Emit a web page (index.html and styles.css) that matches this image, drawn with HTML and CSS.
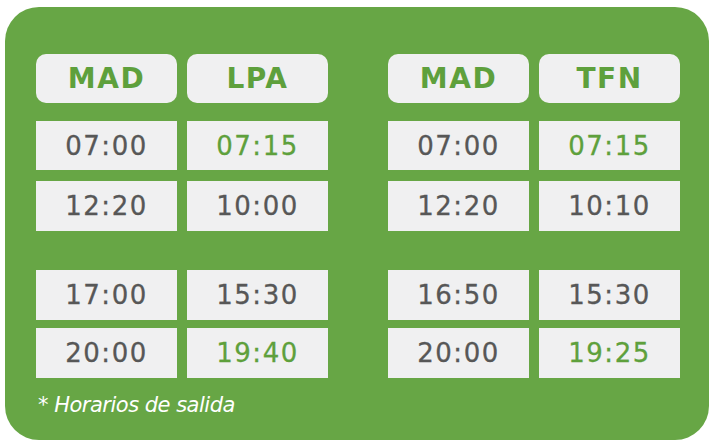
FILE: index.html
```html
<!DOCTYPE html>
<html>
<head>
<meta charset="utf-8">
<link rel="stylesheet" href="styles.css">
</head>
<body>
<div class="card">
  <div class="groups">
    <div class="group">
      <div class="row heads">
        <div class="head">MAD</div>
        <div class="head">LPA</div>
      </div>
      <div class="row r1">
        <div class="cell">07:00</div>
        <div class="cell green">07:15</div>
      </div>
      <div class="row r2">
        <div class="cell">12:20</div>
        <div class="cell">10:00</div>
      </div>
      <div class="row r3">
        <div class="cell">17:00</div>
        <div class="cell">15:30</div>
      </div>
      <div class="row r4">
        <div class="cell">20:00</div>
        <div class="cell green">19:40</div>
      </div>
    </div>
    <div class="group">
      <div class="row heads">
        <div class="head">MAD</div>
        <div class="head">TFN</div>
      </div>
      <div class="row r1">
        <div class="cell">07:00</div>
        <div class="cell green">07:15</div>
      </div>
      <div class="row r2">
        <div class="cell">12:20</div>
        <div class="cell">10:10</div>
      </div>
      <div class="row r3">
        <div class="cell">16:50</div>
        <div class="cell">15:30</div>
      </div>
      <div class="row r4">
        <div class="cell">20:00</div>
        <div class="cell green">19:25</div>
      </div>
    </div>
  </div>
  <p class="note">* Horarios de salida</p>
</div>
</body>
</html>
```
FILE: styles.css
```css
html, body {
  margin: 0;
  padding: 0;
  background: #ffffff;
}
body {
  padding: 7px 0 0 5px;
}
.card {
  width: 704px;
  height: 433px;
  box-sizing: border-box;
  background: #67a645;
  border-radius: 34px;
  padding: 47px 29px 0 31px;
}
.groups {
  display: flex;
  gap: 60px;
}
.group {
  display: flex;
  flex-direction: column;
}
.row {
  display: grid;
  grid-template-columns: 141px 141px;
  column-gap: 10px;
  height: 50px;
}
.heads { height: 49px; }
.r1 { margin-top: 18px; height: 49px; }
.r2 { margin-top: 11px; }
.r3 { margin-top: 39px; }
.r4 { margin-top: 8px; }
.head {
  background: #f0f0f1;
  border-radius: 10px;
  display: flex;
  align-items: center;
  justify-content: center;
  font-family: "DejaVu Sans", sans-serif;
  font-weight: bold;
  font-size: 28px;
  letter-spacing: 1.5px;
  color: #5ea03c;
}
.cell {
  background: #f0f0f1;
  display: flex;
  align-items: center;
  justify-content: center;
  font-family: "DejaVu Sans", sans-serif;
  font-size: 26px;
  color: #575757;
  letter-spacing: 1.5px;
  -webkit-text-stroke: 0.3px currentColor;
}
.cell.green {
  color: #5ea03c;
}
.note {
  margin: 15px 0 0 2px;
  line-height: 24px;
  font-family: "DejaVu Sans", sans-serif;
  font-style: italic;
  font-size: 21px;
  letter-spacing: -0.5px;
  color: #ffffff;
}
```
